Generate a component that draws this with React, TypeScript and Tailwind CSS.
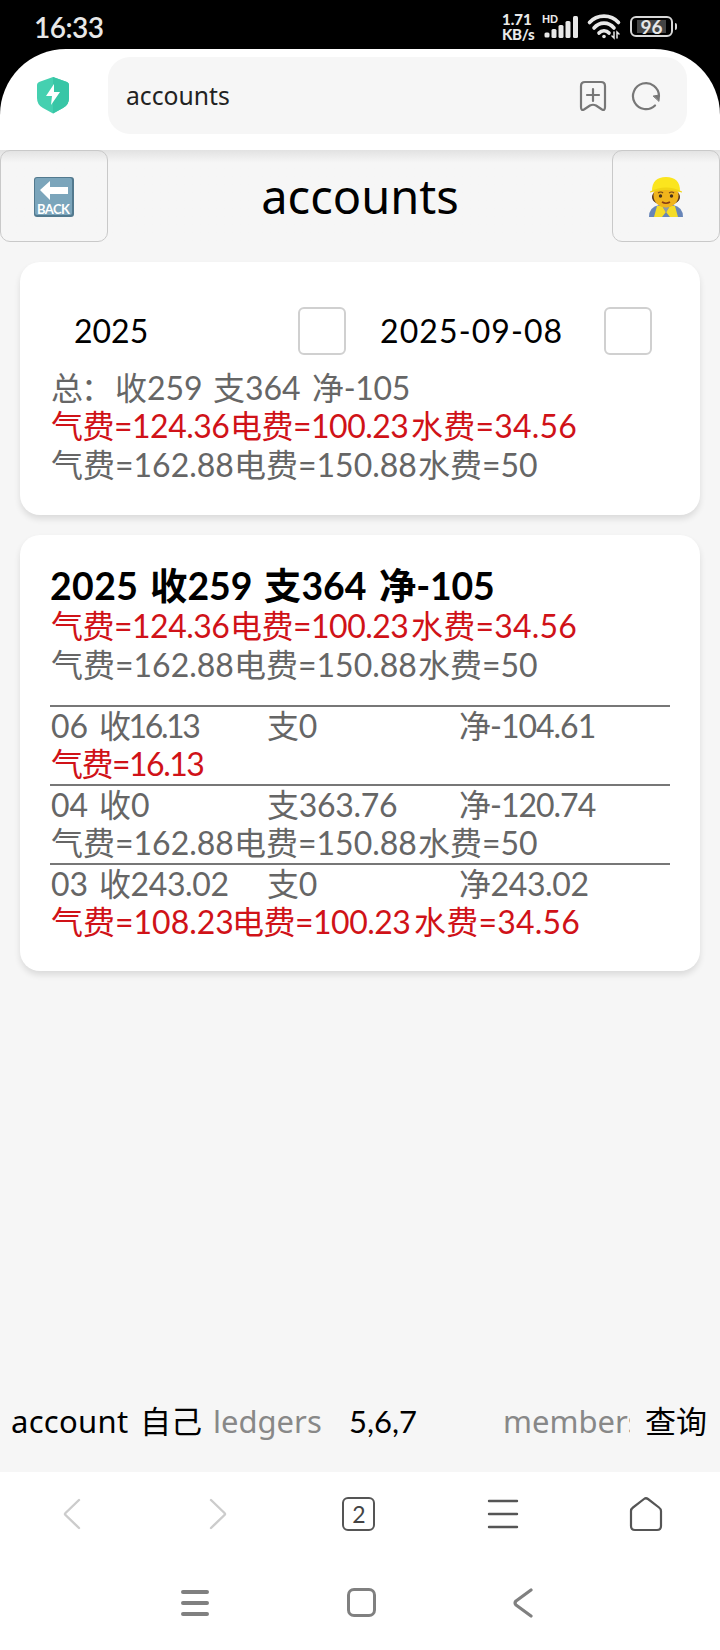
import React from "react";

type Segment = { text: string; className?: string };

const incomeTotal: Segment[] = [
  { text: "气费=124.36", className: "w-[179px] tracking-[-0.5px]" },
  { text: "电费=100.23", className: "w-[181px] tracking-[-0.5px]" },
  { text: "水费=34.56", className: "tracking-[0.2px]" },
];

const expenseTotal: Segment[] = [
  { text: "气费=162.88", className: "w-[183px]" },
  { text: "电费=150.88", className: "w-[184px]" },
  { text: "水费=50" },
];

const months = [
  {
    month: "06",
    income: { text: "收16.13", className: "w-[168px] tracking-[-2.4px]" },
    expense: "支0",
    net: { text: "净-104.61", className: "tracking-[-1px]" },
    red: true,
    items: [{ text: "气费=16.13", className: "tracking-[-1.5px]" }],
  },
  {
    month: "04",
    income: { text: "收0", className: "w-[168px]" },
    expense: "支363.76",
    net: { text: "净-120.74", className: "tracking-[-1px]" },
    red: false,
    items: expenseTotal,
  },
  {
    month: "03",
    income: { text: "收243.02", className: "w-[168px] tracking-[-0.4px]" },
    expense: "支0",
    net: { text: "净243.02", className: "tracking-[-0.4px]" },
    red: true,
    items: [
      { text: "气费=108.23", className: "w-[181px]" },
      { text: "电费=100.23", className: "w-[182px] tracking-[-0.5px]" },
      { text: "水费=34.56", className: "tracking-[0.2px]" },
    ],
  },
];

const Line = ({ items, red }: { items: Segment[]; red?: boolean }) => (
  <div
    className={
      red
        ? "flex h-[38.5px] items-center whitespace-nowrap pl-px text-[#d01218]"
        : "flex h-[38.5px] items-center whitespace-nowrap pl-px text-[#666]"
    }
  >
    {items.map((item) => (
      <span key={item.text} className={item.className}>
        {item.text}
      </span>
    ))}
  </div>
);

const StatusBar = () => (
  <div className="flex h-[49px] items-center bg-black pl-[34px] pr-[43px] pt-[4px] text-[#e8e8e8]">
    <span className="text-[28px] font-semibold leading-none tracking-[-0.5px]">16:33</span>
    <div className="ml-auto flex items-center">
      <div className="w-[39px] text-[15px] font-black leading-[15px] whitespace-nowrap">
        <div>1.71</div>
        <div className="tracking-[-0.3px]">KB/s</div>
      </div>
      <svg className="ml-px" width="38" height="26" viewBox="0 0 38 26" fill="#e8e8e8">
        <text x="0" y="9" fontSize="10.5" fontWeight="900">HD</text>
        <rect x="2.500" y="18.500" width="5" height="5" rx="1.500" />
        <rect x="9.500" y="15" width="5" height="9" rx="1.500" />
        <rect x="16.500" y="11" width="5" height="13" rx="1.500" />
        <rect x="23.500" y="7" width="5" height="17" rx="1.500" />
        <rect x="31" y="2" width="5" height="22" rx="1.500" />
      </svg>
      <svg className="ml-[6px]" width="36" height="28" viewBox="0 0 36 28" fill="none" stroke="#e8e8e8" strokeWidth="3.600" strokeLinecap="round">
        <path d="M3.500 9.500C11 1 25 1 32.500 9.500" />
        <path d="M8 15C13.500 8.500 22.500 8.500 28 15" />
        <path d="M13 20C15.500 17 20.500 17 23 20" />
        <circle cx="18" cy="23.500" r="1.800" fill="#e8e8e8" stroke="none" />
        <path d="M28 19v6l-2-2M31 25v-6l2 2" strokeWidth="1.500" />
      </svg>
      <div className="ml-[8px] flex h-[21px] w-[43px] items-center justify-center rounded-[6px] border-2 border-[#d8d8d8]">
        <span className="flex h-[13px] w-[29px] items-center justify-center bg-[#444] text-[19px] font-bold leading-none">96</span>
      </div>
      <span className="ml-[2px] h-[7px] w-[2px] rounded-r bg-[#d8d8d8]" />
    </div>
  </div>
);

const AddressBar = () => (
  <div className="bg-black">
    <div className="flex h-[101px] rounded-t-[66px] bg-white pt-[8px]">
      <div className="flex w-[108px] shrink-0 pl-[36px] pt-[19px]">
        <svg width="34" height="38" viewBox="0 0 34 38">
          <path d="M17 1 31 6q2 1 2 3v13q0 7-6 10l-10 5.500L7 32q-6-3-6-10V9q0-2 2-3z" fill="#45d0b0" />
          <path d="M17 1 31 6q2 1 2 3v13q0 7-6 10l-10 5.500z" fill="#38c6a6" />
          <path d="m18 8-8 12h6l-1 9 9-13h-6z" fill="#fff" />
        </svg>
      </div>
      <div className="flex h-[77px] w-[579px] items-center rounded-[22px] bg-[#f6f6f6] pl-[18px] pr-[26px]">
        <span className="font-['Noto_Sans'] text-[24.7px] text-[#222]">accounts</span>
        <svg className="ml-auto" width="28" height="32" viewBox="0 0 28 32" fill="none" stroke="#777" strokeWidth="2.200" strokeLinecap="round" strokeLinejoin="round">
          <path d="M6 2h16q4 0 4 4v21q0 4-3 2.500l-6-4q-3-1.500-6 0l-6 4Q2 31 2 27V6q0-4 4-4z" />
          <path d="M14 9v12M8 15h12" />
        </svg>
        <svg className="ml-[24px]" width="30" height="30" viewBox="0 0 30 30" fill="none" stroke="#777" strokeWidth="2.200" strokeLinecap="round">
          <path d="M24 24.500A13 13 0 1 1 28 15" />
          <path d="m22.500 15 6-1-.5 6z" fill="#777" strokeWidth="1" />
        </svg>
      </div>
    </div>
  </div>
);

const PageHeader = () => (
  <div className="flex h-[92px] justify-between bg-linear-to-b from-[#e2e2e2] via-[#f6f6f6] via-[14%] to-[#f6f6f6]">
    <button className="flex h-[92px] w-[108px] items-center justify-center rounded-[10px] border border-[#c9c9c9] pt-[2px]">
      <svg width="40" height="40" viewBox="0 0 40 40">
        <rect width="40" height="40" rx="3" fill="#52798e" />
        <rect x="1" y="1" width="37" height="37" rx="2" fill="#7ba5bb" />
        <path d="M6 13 16 4v6h18v7H16v6z" fill="#fff" />
        <text x="19.500" y="36.500" textAnchor="middle" textLength="33" fontSize="13" fontWeight="700" fill="#fff">BACK</text>
      </svg>
    </button>
    <h1 className="font-['Noto_Sans'] text-[47px] leading-[92px]">accounts</h1>
    <button className="flex h-[92px] w-[108px] items-center justify-center rounded-[10px] border border-[#c9c9c9] pt-[2px]">
      <svg width="36" height="42" viewBox="0 0 36 42">
        <path d="M1 41q0-10 10-12h14q10 2 10 12z" fill="#6785b8" />
        <path d="M9 30h5l4 6 4-6h5l3 11h-8l-4-5-4 5H6z" fill="#f5dc27" />
        <path d="M14 29h8l-4 8z" fill="#8d99ab" />
        <ellipse cx="18" cy="21" rx="14" ry="8.500" fill="#57371f" />
        <ellipse cx="18" cy="19.500" rx="12.500" ry="12" fill="#f0b41c" />
        <path d="M4 15Q4 1 18 1t14 14q-14-5-28 0z" fill="#fbe51e" />
        <path d="M2 15.500q16-8 32 0v1q-16-5-32 0z" fill="#f1d414" />
        <circle cx="12.500" cy="20" r="1.700" fill="#44301e" />
        <circle cx="23.500" cy="20" r="1.700" fill="#44301e" />
        <path d="M10 17q3-2 5 0M21 17q3-2 5 0" fill="none" stroke="#744a18" strokeWidth="1.200" />
        <path d="M14 26q4 2.500 8 0" fill="none" stroke="#8a3f14" strokeWidth="1.600" />
      </svg>
    </button>
  </div>
);

const FilterCard = () => (
  <section className="h-[253px] rounded-[20px] bg-white px-[30px] pt-[45px] shadow-[0_4px_6px_rgba(0,0,0,0.11)]">
    <div className="mb-[13.5px] flex h-[48px] items-center text-black">
      <span className="w-[248px] pl-[24px]">2025</span>
      <span className="h-[48px] w-[48px] rounded-[6px] border-2 border-[#d0d0d0]" />
      <span className="w-[258px] pl-[34px] tracking-[1.1px]">2025-09-08</span>
      <span className="h-[48px] w-[48px] rounded-[6px] border-2 border-[#d0d0d0]" />
    </div>
    <Line
      items={[
        { text: "总：", className: "w-[64px] tracking-[-2px]" },
        { text: "收259", className: "w-[98px]" },
        { text: "支364", className: "w-[99px]" },
        { text: "净-105", className: "tracking-[-0.3px]" },
      ]}
    />
    <Line items={incomeTotal} red />
    <Line items={expenseTotal} />
  </section>
);

const YearCard = () => (
  <section className="h-[436px] rounded-[20px] bg-white px-[30px] pt-[30px] shadow-[0_4px_6px_rgba(0,0,0,0.11)]">
    <h2 className="flex h-[42px] items-center whitespace-nowrap text-[37.4px] font-bold text-black">
      <span className="w-[100px] tracking-[0.4px]">2025</span>
      <span className="w-[114px]">收259</span>
      <span className="w-[115px]">支364</span>
      <span className="tracking-[-0.2px]">净-105</span>
    </h2>
    <Line items={incomeTotal} red />
    <Line items={expenseTotal} />
    <div className="mt-[20.500px]">
      {months.map((m) => (
        <div key={m.month} className="h-[79px] border-t-2 border-[#777]">
          <div className="flex h-[38.5px] items-center whitespace-nowrap pl-px text-[#666]">
            <span className="w-[48px]">{m.month}</span>
            <span className={m.income.className}>{m.income.text}</span>
            <span className="w-[192px] tracking-[-0.3px]">{m.expense}</span>
            <span className={m.net.className}>{m.net.text}</span>
          </div>
          <Line items={m.items} red={m.red} />
        </div>
      ))}
    </div>
  </section>
);

const QueryBar = () => (
  <div className="flex h-[100px] items-center whitespace-nowrap pb-[2px] pl-[11px] font-['Noto_Sans','Noto_Sans_CJK_SC',sans-serif] text-[31px] text-black">
    <span className="w-[129px] tracking-[0.3px]">account</span>
    <span className="w-[73px]">自己</span>
    <span className="w-[136px] text-[#888]">ledgers</span>
    <span className="w-[154px] font-['Lato']">5,6,7</span>
    <span className="w-[127px] overflow-hidden text-[#888]">members</span>
    <button className="ml-[15px]">查询</button>
  </div>
);

const BrowserNav = () => (
  <nav className="grid h-[84px] grid-cols-5 items-center justify-items-center pr-[2px]">
    <svg width="18" height="32" viewBox="0 0 18 32" fill="none" stroke="#ccc" strokeWidth="2.400" strokeLinecap="round" strokeLinejoin="round">
      <path d="M16 2 2.500 15q-1 1 0 2L16 30" />
    </svg>
    <svg className="ml-[5px]" width="18" height="32" viewBox="0 0 18 32" fill="none" stroke="#ccc" strokeWidth="2.400" strokeLinecap="round" strokeLinejoin="round">
      <path d="m2 2 13.500 13q1 1 0 2L2 30" />
    </svg>
    <span className="flex h-[34px] w-[33px] items-center justify-center rounded-[6px] border-2 border-[#555] text-[23px] leading-none text-[#444]">
      2
    </span>
    <svg width="32" height="30" viewBox="0 0 32 30" stroke="#555" strokeWidth="2.400" strokeLinecap="round">
      <path d="M2 2h28M2 15h28M2 28h28" />
    </svg>
    <svg width="34" height="36" viewBox="0 0 34 36" fill="none" stroke="#555" strokeWidth="2.200" strokeLinejoin="round">
      <path d="M2 15q0-2 2-3.500L15 3q2-1.500 4 0l11 8.500q2 1.500 2 3.500v15q0 4-4 4H6q-4 0-4-4z" />
    </svg>
  </nav>
);

const SystemNav = () => (
  <nav className="flex h-[94px] items-center justify-between pb-px pl-[181px] pr-[184px]">
    <svg width="28" height="28" viewBox="0 0 28 28" stroke="#808080" strokeWidth="4" strokeLinecap="round">
      <path d="M2 3h24M2 14h24M2 25h24" />
    </svg>
    <span className="h-[29px] w-[29px] rounded-[7px] border-3 border-[#808080]" />
    <svg className="mr-[3px]" width="20" height="30" viewBox="0 0 20 30" fill="none" stroke="#808080" strokeWidth="3.200" strokeLinecap="round" strokeLinejoin="round">
      <path d="M18 2 3 13q-2 2 0 4l15 11" />
    </svg>
  </nav>
);

const App = () => {
  return (
    <div className="flex h-[1650px] w-[720px] flex-col overflow-hidden bg-white font-['Lato','Noto_Sans_CJK_SC',sans-serif] text-[32px]">
      <StatusBar />
      <AddressBar />
      <main className="flex h-[1322px] flex-col bg-[#f6f6f6]">
        <PageHeader />
        <div className="flex grow flex-col gap-[20px] px-[20px] pt-[20px]">
          <FilterCard />
          <YearCard />
        </div>
        <QueryBar />
      </main>
      <BrowserNav />
      <SystemNav />
    </div>
  );
};

export default App;
